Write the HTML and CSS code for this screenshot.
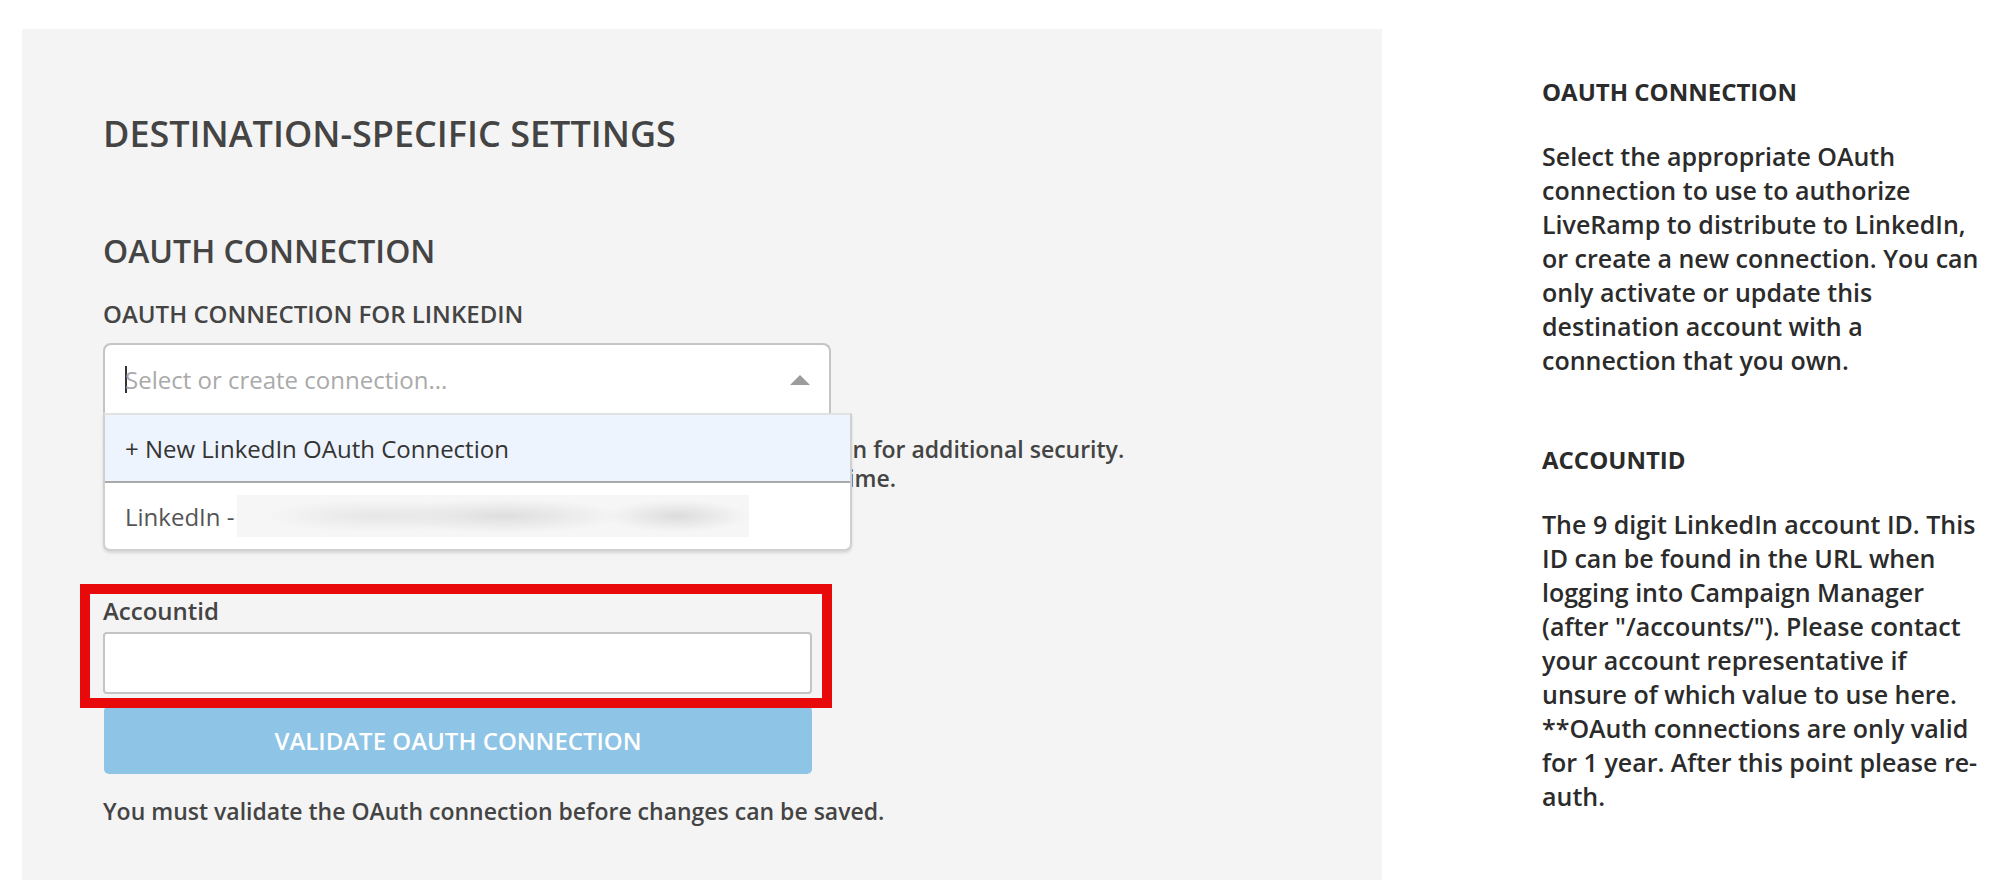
FILE: index.html
```html
<!DOCTYPE html>
<html lang="en">
<head>
<meta charset="UTF-8" />
<title>Destination Settings - LinkedIn</title>
<link rel="stylesheet" href="styles.css">
</head>
<body>
<div class="page">
  <section class="settings">
    <h1>Destination-Specific Settings</h1>
    <h2>OAuth Connection</h2>
    <div class="field-label">OAuth Connection for LinkedIn</div>
    <div class="combo">
      <div class="combo-control">
        <span class="combo-input"><span class="caret"></span>Select or create connection...</span>
        <span class="arrow-up"></span>
      </div>
      <ul class="combo-menu">
        <li class="combo-option active">+ New LinkedIn OAuth Connection</li>
        <li class="combo-option">LinkedIn - <span class="redacted"></span></li>
      </ul>
    </div>
    <p class="hint hint-select">We recommend using a dedicated LinkedIn login to add a connection for additional security.<br>Any connection can be revoked or reauthorized in LinkedIn at any time.</p>

    <div class="form-group">
      <label class="input-label" for="accountid">Accountid</label>
      <input class="text-input" id="accountid" type="text" />
      <div class="highlight"></div>
    </div>
    <button class="validate-btn" disabled>Validate OAuth Connection</button>
    <p class="hint hint-save">You must validate the OAuth connection before changes can be saved.</p>
  </section>

  <aside class="help">
    <h3>OAuth Connection</h3>
    <p>Select the appropriate OAuth connection to use to authorize LiveRamp to distribute to LinkedIn, or create a new connection. You can only activate or update this destination account with a connection that you own.</p>
    <h3>AccountId</h3>
    <p>The 9 digit LinkedIn account ID. This ID can be found in the URL when logging into Campaign Manager (after "/accounts/"). Please contact your account representative if unsure of which value to use here. **OAuth connections are only valid for 1 year. After this point please re-auth.</p>
  </aside>
</div>
</body>
</html>
```

FILE: styles.css
```css
body {
  margin: 0; background: #fff; color: #444;
  font-family: "Open Sans", "Noto Sans", sans-serif;
}
.page {
  display: flex; align-items: flex-start; padding: 29px 0 0 22px; height: 880px; box-sizing: border-box;
}

/* left settings panel */
.settings {
  width: 1360px; height: 851px; box-sizing: border-box; flex-shrink: 0;
  background: #f4f4f4; padding: 82px 0 0 81px;
}
h1 {
  margin: 0; font-size: 36px; line-height: 46px; font-weight: 600; text-transform: uppercase; color: #444;
}
h2 {
  margin: 74px 0 0; font-size: 32px; line-height: 40px; font-weight: 600; text-transform: uppercase; color: #444;
}
.field-label {
  margin-top: 28px; font-size: 24px; line-height: 30px; font-weight: 600; text-transform: uppercase;
}

.combo {
  position: relative; width: 728px; margin-top: 14px;
}
.combo-control {
  height: 71px; box-sizing: border-box; background: #fff;
  border: 2px solid #c4c4c4; border-bottom: none; border-radius: 8px 8px 0 0;
  display: flex; align-items: center; justify-content: space-between; padding: 0 19px 0 20px;
}
.combo-input {
  font-size: 24px; color: #aaa; display: flex; align-items: center;
}
.caret {
  display: inline-block; width: 0; height: 27px; border-left: 2px solid #333; margin-right: -2px;
}
.arrow-up {
  width: 0; height: 0; border-left: 10px solid transparent; border-right: 10px solid transparent;
  border-bottom: 10px solid #9c9c9c;
}
.combo-menu {
  position: absolute; top: 70px; left: 0; width: 749px; box-sizing: border-box; z-index: 5;
  margin: 0; padding: 0; list-style: none; background: #fff;
  border: 2px solid #d0d0d0; border-top-color: #e2e2e2; border-radius: 0 0 7px 7px;
  box-shadow: 0 2px 3px rgba(0, 0, 0, 0.12);
}
.combo-option {
  height: 66px; display: flex; align-items: center; padding-left: 20px;
  font-size: 24px; color: #555;
}
.combo-option.active {
  background: #edf4fd; color: #333; border-bottom: 2px solid #a9a9a9;
}
.redacted {
  display: inline-block; width: 512px; height: 42px; margin-left: 3px;
  background:
    radial-gradient(ellipse 110px 16px at 27% 50%, #e6e6e6, transparent),
    radial-gradient(ellipse 120px 17px at 52% 50%, #dedede, transparent),
    radial-gradient(ellipse 70px 16px at 86% 50%, #dcdcdc, transparent),
    #f6f6f6;
}

.hint {
  margin: 0; font-weight: 600; color: #444;
}
.hint-select {
  margin-top: 21px; font-size: 23px; line-height: 29px; white-space: nowrap;
}
.hint-save {
  margin-top: 22px; font-size: 23px; line-height: 30px;
}

.form-group {
  position: relative; width: 709px; margin-top: 103px;
}
.input-label {
  display: block; font-size: 24px; line-height: 30px; font-weight: 600; color: #444;
}
.text-input {
  display: block; width: 100%; height: 62px; box-sizing: border-box; margin-top: 6px;
  border: 2px solid #c4c4c4; border-radius: 4px; background: #fff; font: inherit;
}
.highlight {
  position: absolute; top: -12px; left: -23px; width: 752px; height: 124px;
  box-sizing: border-box; border: 10px solid #e80a0a; pointer-events: none;
}
.validate-btn {
  display: block; width: 708px; height: 68px; margin: 12px 0 0 1px;
  background: #8ec4e6; color: #fff; border: none; border-radius: 5px;
  font-family: inherit; font-size: 24px; font-weight: 600; text-transform: uppercase;
}

/* right help column */
.help {
  width: 447px; margin-left: 160px; padding-top: 48px; color: #2b2b2b;
}
.help h3 {
  margin: 0 0 32px; font-size: 24px; line-height: 30px; font-weight: 700; text-transform: uppercase;
}
.help p {
  margin: 0 0 68px; font-size: 25px; line-height: 34px; font-weight: 600;
}
```
